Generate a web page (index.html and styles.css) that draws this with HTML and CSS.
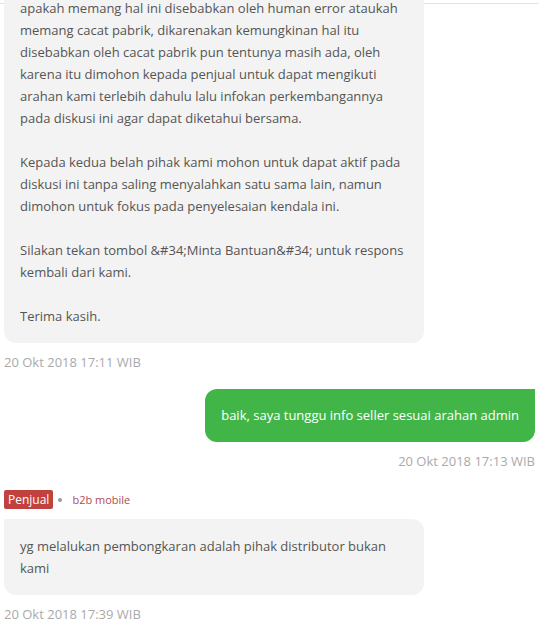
FILE: index.html
```html
<!DOCTYPE html>
<html lang="en">
<head>
  <meta charset="UTF-8" />
  <meta name="viewport" content="width=device-width, initial-scale=1" />
  <title>Diskusi</title>
  <link rel="stylesheet" href="styles.css">
</head>
<body>

  <div class="chat">

    <div class="msg">
      <div class="bubble first">
        apakah memang hal ini disebabkan oleh human error ataukah memang cacat pabrik, dikarenakan kemungkinan hal itu disebabkan oleh cacat pabrik pun tentunya masih ada, oleh karena itu dimohon kepada penjual untuk dapat mengikuti arahan kami terlebih dahulu lalu infokan perkembangannya pada diskusi ini agar dapat diketahui bersama.<br><br>
        Kepada kedua belah pihak kami mohon untuk dapat aktif pada diskusi ini tanpa saling menyalahkan satu sama lain, namun dimohon untuk fokus pada penyelesaian kendala ini.<br><br>
        Silakan tekan tombol &amp;#34;Minta Bantuan&amp;#34; untuk respons kembali dari kami.<br><br>
        Terima kasih.
      </div>
      <div class="time">20 Okt 2018 17:11 WIB</div>
    </div>

    <div class="msg mine">
      <div class="bubble green">baik, saya tunggu info seller sesuai arahan admin</div>
      <div class="time">20 Okt 2018 17:13 WIB</div>
    </div>

    <div class="msg">
      <div class="sender">
        <span class="badge">Penjual</span>
        <span class="dot"></span>
        <span class="shop">b2b mobile</span>
      </div>
      <div class="bubble">yg melalukan pembongkaran adalah pihak distributor bukan kami</div>
      <div class="time">20 Okt 2018 17:39 WIB</div>
    </div>

  </div>

</body>
</html>
```

FILE: styles.css
```css
body {
  margin: 0;
  font-family: "Open Sans", Arial, sans-serif;
  background: #fff;
  overflow: hidden;
}
.chat {
  position: relative;
  padding: 0 4px;
}
/* border of the header above, scrolled off */
.chat::before {
  content: "";
  position: absolute;
  top: 3px;
  left: 0;
  right: 0;
  height: 1px;
  background: #e3e3e3;
}
.msg {
  position: relative;
  display: flex;
  flex-direction: column;
  align-items: flex-start;
  margin-bottom: 17px;
}
.msg.mine {
  align-items: flex-end;
  margin-bottom: 19px;
}
.bubble {
  box-sizing: border-box;
  max-width: 420px;
  width: 420px;
  padding: 16px;
  background: #f3f3f3;
  color: #555;
  font-size: 13px;
  line-height: 22px;
  border-radius: 0 12px 12px 12px;
}
.bubble.first {
  margin-top: -19px;
}
.bubble.green {
  width: auto;
  max-width: none;
  padding: 15px 16px 16px;
  background: #42b549;
  color: #fff;
  border-radius: 12px 0 12px 12px;
}
.time {
  margin-top: 9px;
  font-size: 13px;
  line-height: 20px;
  color: #aaa;
}
.sender {
  display: flex;
  align-items: center;
  height: 19px;
  margin-bottom: 10px;
}
.badge {
  background: #c0413e;
  color: #fff;
  font-size: 12px;
  line-height: 19px;
  padding: 0 4px;
  border-radius: 2px;
}
.dot {
  width: 4px;
  height: 4px;
  border-radius: 50%;
  background: #999;
  margin: 0 10px 0 5px;
}
.shop {
  font-size: 11px;
  color: #b14a55;
}
```
